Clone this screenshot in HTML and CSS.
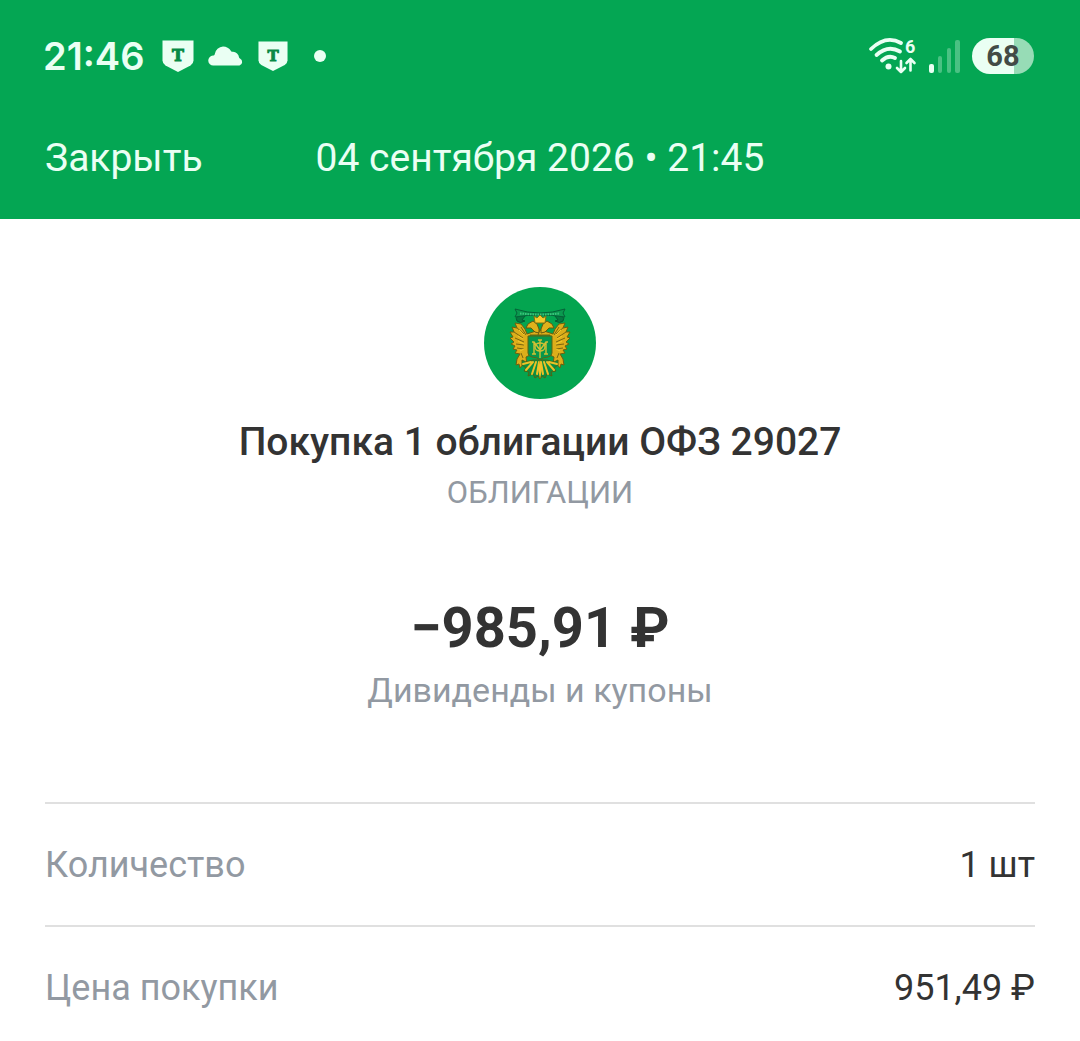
FILE: index.html
```html
<!DOCTYPE html>
<html lang="ru">
<head>
    <meta charset="UTF-8">
    <meta name="viewport" content="width=device-width, initial-scale=1.0">
    <title>Покупка 1 облигации ОФЗ 29027</title>
    <link rel="stylesheet" href="styles.css">
</head>
<body>
    <header class="header">
        <div class="status-bar">
            <div class="status-left">
                <span class="clock">21:46</span>
                <svg class="icon-bank" width="32" height="32" viewBox="0 0 32 32">
                    <path d="M0.500 0.500h31v20q0 3-3 5L16 32 3.500 25.500q-3-2-3-5z" fill="#eafff3"/>
                    <text x="16" y="21" text-anchor="middle">T</text>
                </svg>
                <svg class="icon-cloud" width="36" height="22" viewBox="0 0 36 22">
                    <path d="M5.500 20.500a5 5 0 0 1-.5-10C6 10.500 6.500 10 6.800 9A9 9 0 0 1 15 1.500a9.500 9.500 0 0 1 8 4.500c.5.800 1 .9 2 .8a6 6 0 0 1 6 5.500c.1.700.4 1.100 1 1.300A3.700 3.700 0 0 1 31.500 20.500z" fill="#eafff3"/>
                </svg>
                <svg class="icon-bank" width="30" height="30" viewBox="0 0 32 32">
                    <path d="M0.500 0.500h31v20q0 3-3 5L16 32 3.500 25.500q-3-2-3-5z" fill="#eafff3"/>
                    <text x="16" y="21" text-anchor="middle">T</text>
                </svg>
                <span class="dot"></span>
            </div>
            <div class="status-right">
                <svg class="icon-wifi" width="50" height="44" viewBox="0 -4 50 44">
                    <g fill="none" stroke="#eafff3" stroke-width="3.800" stroke-linecap="round">
                        <path d="M2 11Q17-3.500 32 5"/>
                        <path d="M7.500 17Q19 6.500 31 13.500"/>
                        <path d="M13 22.500Q19.500 16.500 26 20"/>
                    </g>
                    <circle cx="19.500" cy="28.500" r="3" fill="#eafff3"/>
                    <g fill="none" stroke="#eafff3" stroke-width="2.600" stroke-linecap="round" stroke-linejoin="round">
                        <path d="M32 23v11M28 30l4 4 4-4"/>
                        <path d="M41.500 32.500V21M37.500 25l4-4 4 4"/>
                    </g>
                    <text x="36" y="15">6</text>
                </svg>
                <svg class="icon-signal" width="33" height="34" viewBox="0 0 33 34" fill="#eafff3">
                    <rect x="0" y="25" width="5" height="9" rx="2"/>
                    <g opacity="0.3">
                        <rect x="9" y="17" width="4" height="17" rx="2"/>
                        <rect x="18" y="9" width="4" height="25" rx="2"/>
                        <rect x="26" y="1" width="5" height="33" rx="2"/>
                    </g>
                </svg>
                <span class="battery">68</span>
            </div>
        </div>
        <nav class="nav-bar">
            <button type="button" class="close-btn">Закрыть</button>
            <time class="date" datetime="2026-09-04T21:45">04 сентября 2026 • 21:45</time>
        </nav>
    </header>

    <main>
        <section class="summary">
            <svg class="logo" width="112" height="112" viewBox="0 0 112 112">
                <circle cx="56" cy="56" r="56" fill="#04a550"/>
                <!-- ribbon -->
                <path d="M34 29q-3 2-1 5 3 3 8 0l-3-1 3-4M78 29q3 2 1 5-3 3-8 0l3-1-3-4" fill="#067a41" stroke="#055c33"/>
                <path d="M31 22q25 8 50 0l-2 4 2 4q-25-4-50 0l2-4z" fill="#0b9a4f" stroke="#056238"/>
                <path d="M36 26.500q20 2 40 0" fill="none" stroke="#3cc47d" stroke-width="2" stroke-dasharray="1.500 1"/>
                <!-- one half of the eagle, mirrored below -->
                <g id="eagle-half">
                    <path d="M56 43l-7 2-6 2-2-5-4-5-6-1 2 5-5-1 2 5-4 0 3 5-3 1 4 4-3 2 4 2-2 3 4 1-2 3 5 1-3 5-1 6 3-1 1 4 4-5 3 2-1-8 4-2V48l12 0z" fill="#dcae1b" stroke="#6d600e"/>
                    <path d="M55 46l-4-1-4-4-5 0 2-4 5-3 4 3 2 5z" fill="#dfb21c" stroke="#64590f"/>
                    <path d="M32 40l8 7M30 45l9 6M31 51l9 4M32 57l8 1M33 61l7 1M37 40l5 8M37 66l2 5" fill="none" stroke="#786610"/>
                    <path d="M35 43l5 5M34 49l5 3M34 54l6 3M36 64l4-2" fill="none" stroke="#f3cb2b"/>
                    <path d="M56 73l-7 0-7 2-4-2 0 5 4 3-2 3 5 1-1 4 5-2 2 4 3-2 2 3z" fill="#0b8f43" stroke="#4f6414"/>
                    <path d="M55 75l-2 12M52 75l-4 12M49 75l-7 8M47 75l-8 2" fill="none" stroke="#eec026" stroke-width="2" stroke-linecap="round"/>
                </g>
                <use href="#eagle-half" transform="translate(112 0) scale(-1 1)"/>
                <path d="M51 36l-1-7 3 2 3-3 3 3 3-2-1 7z" fill="#f4cb2c" stroke="#82700f"/>
                <path d="M56 73l-2 9 2 10 2-10z" fill="#f1c226"/>
                <!-- shield with monogram -->
                <path d="M44 49h24v17q0 3-4 4-5 0-8 3-3-3-8-3-4-1-4-4z" fill="#07974b" stroke="#5f6412"/>
                <g fill="none" stroke="#d0c034" stroke-width="1.400">
                    <path d="M56 53v18M54 53h4M48 55h2l6 8 6-8h2M50 55v12M62 55v12M48 67h4M60 67h4"/>
                    <ellipse cx="56" cy="60" rx="5" ry="4"/>
                </g>
            </svg>
            <h1 class="title">Покупка 1 облигации ОФЗ 29027</h1>
            <p class="category">ОБЛИГАЦИИ</p>
            <p class="amount">−985,91 ₽</p>
            <p class="account">Дивиденды и купоны</p>
        </section>

        <dl class="details">
            <div class="row">
                <dt>Количество</dt>
                <dd>1 шт</dd>
            </div>
            <div class="row">
                <dt>Цена покупки</dt>
                <dd>951,49 ₽</dd>
            </div>
        </dl>
    </main>
</body>
</html>
```
FILE: styles.css
```css
* { box-sizing: border-box; }

body {
    margin: 0;
    font-family: Roboto, "Liberation Sans", sans-serif;
    color: #333333;
    background: #ffffff;
}

h1, p, dl, dd { margin: 0; }

svg { display: block; flex-shrink: 0; }

/* Header */
.header {
    background: #04a653;
    color: #eafff3;
    padding: 32px 45px 37px;
}

.status-bar {
    display: flex;
    justify-content: space-between;
    align-items: center;
    height: 48px;
    margin: 0 1px 0 -2px;
}

.status-left, .status-right {
    display: flex;
    align-items: center;
}

.status-left { gap: 14px; }
.status-right { gap: 10px; }

.clock {
    margin-right: 4px;
    font-family: Inter, Roboto, sans-serif;
    font-size: 38px;
    font-weight: 600;
    line-height: 48px;
}

.icon-bank text {
    font: bold 16px "DejaVu Serif", serif;
    fill: #078a46;
    stroke: #078a46;
}

.icon-wifi { overflow: visible; }

.icon-wifi text {
    font: bold 18px Roboto, sans-serif;
    fill: #eafff3;
}

.dot {
    width: 12px;
    height: 12px;
    margin-left: 12px;
    border-radius: 50%;
    background: #eafff3;
}

.battery {
    width: 62px;
    height: 36px;
    border-radius: 18px;
    background: linear-gradient(to right, #eafff3 68%, #97dcb6 68%);
    color: #424b46;
    font-family: Roboto, sans-serif;
    font-size: 29px;
    font-weight: 700;
    line-height: 36px;
    text-align: center;
}

.nav-bar {
    display: grid;
    grid-template-columns: 1fr auto 1fr;
    align-items: center;
    margin-top: 54px;
    font-size: 39px;
    line-height: 48px;
}

.close-btn {
    justify-self: start;
    padding: 0;
    border: 0;
    background: none;
    color: inherit;
    font: inherit;
    cursor: pointer;
}

/* Operation summary */
.summary {
    display: flex;
    flex-direction: column;
    align-items: center;
    padding: 68px 45px 92px;
    text-align: center;
}

.title {
    margin-top: 19px;
    font-size: 39px;
    font-weight: 500;
    line-height: 48px;
}

.category {
    margin-top: 7px;
    font-size: 31px;
    line-height: 40px;
    color: #9299a2;
}

.amount {
    margin-top: 79px;
    font-size: 56px;
    font-weight: 700;
    line-height: 72px;
}

.account {
    margin-top: 6px;
    font-size: 34px;
    line-height: 40px;
    color: #9299a2;
}

/* Details */
.details { padding: 0 45px; }

.row {
    display: flex;
    justify-content: space-between;
    align-items: center;
    height: 123px;
    border-top: 2px solid #e0e0e0;
    font-size: 36px;
    line-height: 48px;
}

.row dt { color: #9299a2; }
```
